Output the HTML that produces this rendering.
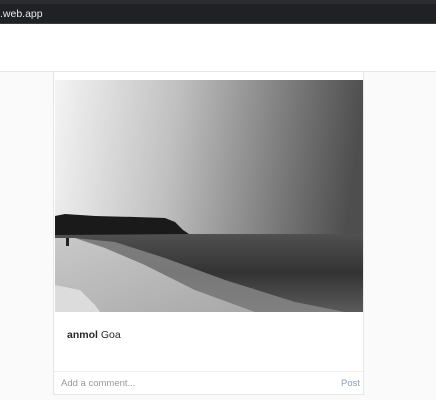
<!DOCTYPE html>
<html><head><style>
body{margin:0;width:436px;height:400px;overflow:hidden;background:#fafafa;font-family:"Liberation Sans",sans-serif;position:relative}
.chrome{position:absolute;left:0;top:0;width:436px;height:24px;background:#202124;border-top:4px solid #2b2c2f;box-sizing:border-box;border-bottom:1px solid #3a3b3e}
.chrome span{position:absolute;left:0;top:4px;color:#e8eaed;font-size:10.5px}
.hdr{position:absolute;left:0;top:24px;width:436px;height:47px;background:#fff;border-bottom:1px solid #e6e6e6}
.card{position:absolute;left:53px;top:72px;width:309px;height:322px;background:#fff;border:1px solid #e6e6e6;border-top:none}
.img{position:absolute;left:1px;top:8px}
.cap{position:absolute;left:13px;top:257px;font-size:10.5px;color:#262626}
.cm{position:absolute;left:0;top:299px;width:309px;height:23px;border-top:1px solid #efefef;font-size:9.5px;color:#999}
.cm .a{position:absolute;left:7px;top:6px}
.cm .p{position:absolute;right:3px;top:6px;color:#8aa0b8}
</style></head><body>
<div class="chrome"><span>.web.app</span></div>
<div class="hdr"></div>
<div class="card">
<svg class="img" width="308" height="232" viewBox="0 0 308 232">
<defs>
<linearGradient id="sky" x1="0" y1="0" x2="1" y2="0.1"><stop offset="0" stop-color="#f4f4f4"/><stop offset="0.4" stop-color="#c0c0c0"/><stop offset="1" stop-color="#4e4e4e"/></linearGradient>
<linearGradient id="sea" x1="0" y1="0" x2="0" y2="1"><stop offset="0" stop-color="#505050"/><stop offset="0.5" stop-color="#333"/><stop offset="1" stop-color="#5a5a5a"/></linearGradient>
<linearGradient id="sand" x1="0" y1="0" x2="1" y2="1"><stop offset="0" stop-color="#c8c8c8"/><stop offset="1" stop-color="#a8a8a8"/></linearGradient>
</defs>
<rect width="308" height="232" fill="url(#sky)"/>
<rect y="154" width="308" height="78" fill="url(#sea)"/>
<path d="M0 136 L10 134 L40 136 L80 137 L110 138 L120 142 L128 150 L134 154 L0 155Z" fill="#1a1a1a"/>
<path d="M20 158 L60 162 L110 178 L170 200 L240 222 L290 232 L200 232 L140 210 L90 185 L40 165Z" fill="#8a8a8a" opacity="0.8"/>
<path d="M0 158 L20 158 L50 168 L90 185 L140 210 L200 232 L0 232Z" fill="url(#sand)"/>
<path d="M0 205 L25 210 L40 225 L45 232 L0 232Z" fill="#dcdcdc"/>
<rect x="11" y="158" width="3" height="8" fill="#222"/>
</svg>
<div class="cap"><b>anmol</b> Goa</div>
<div class="cm"><span class="a">Add a comment...</span><span class="p">Post</span></div>
</div>
</body></html>
